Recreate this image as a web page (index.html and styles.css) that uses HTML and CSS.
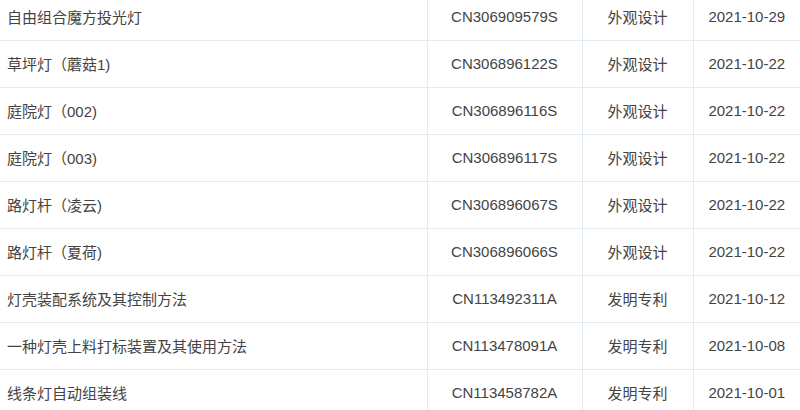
FILE: index.html
```html
<!DOCTYPE html>
<html lang="zh">
<head>
<meta charset="utf-8">
<link rel="stylesheet" href="styles.css">
</head>
<body>
<div class="wrap">
<table class="patents">
  <colgroup><col class="c1"><col class="c2"><col class="c3"><col class="c4"></colgroup>
  <tbody>
    <tr><td class="name">自由组合魔方投光灯</td><td>CN306909579S</td><td>外观设计</td><td>2021-10-29</td></tr>
    <tr><td class="name">草坪灯（蘑菇1)</td><td>CN306896122S</td><td>外观设计</td><td>2021-10-22</td></tr>
    <tr><td class="name">庭院灯（002)</td><td>CN306896116S</td><td>外观设计</td><td>2021-10-22</td></tr>
    <tr><td class="name">庭院灯（003)</td><td>CN306896117S</td><td>外观设计</td><td>2021-10-22</td></tr>
    <tr><td class="name">路灯杆（凌云)</td><td>CN306896067S</td><td>外观设计</td><td>2021-10-22</td></tr>
    <tr><td class="name">路灯杆（夏荷)</td><td>CN306896066S</td><td>外观设计</td><td>2021-10-22</td></tr>
    <tr><td class="name">灯壳装配系统及其控制方法</td><td>CN113492311A</td><td>发明专利</td><td>2021-10-12</td></tr>
    <tr><td class="name">一种灯壳上料打标装置及其使用方法</td><td>CN113478091A</td><td>发明专利</td><td>2021-10-08</td></tr>
    <tr><td class="name">线条灯自动组装线</td><td>CN113458782A</td><td>发明专利</td><td>2021-10-01</td></tr>
  </tbody>
</table>
</div>
</body>
</html>
```
FILE: styles.css
```css
html, body {
  margin: 0;
  padding: 0;
  background: #fff;
  overflow: hidden;
}
.wrap {
  margin-top: -6px;
}
.patents {
  width: 800px;
  border-collapse: collapse;
  table-layout: fixed;
  font-family: "Liberation Sans", "Noto Sans CJK SC", sans-serif;
  font-size: 15px;
  color: #444;
}
.c1 { width: 427px; }
.c2 { width: 155px; }
.c3 { width: 111px; }
.c4 { width: 107px; }
.patents td {
  height: 44px;
  padding: 0 0 2px;
  text-align: center;
  vertical-align: middle;
  border-bottom: 1px solid #e3ebf6;
  border-left: 1px solid #e3ebf6;
  white-space: nowrap;
}
.patents td.name {
  text-align: left;
  padding-left: 7px;
  border-left: none;
}
```
